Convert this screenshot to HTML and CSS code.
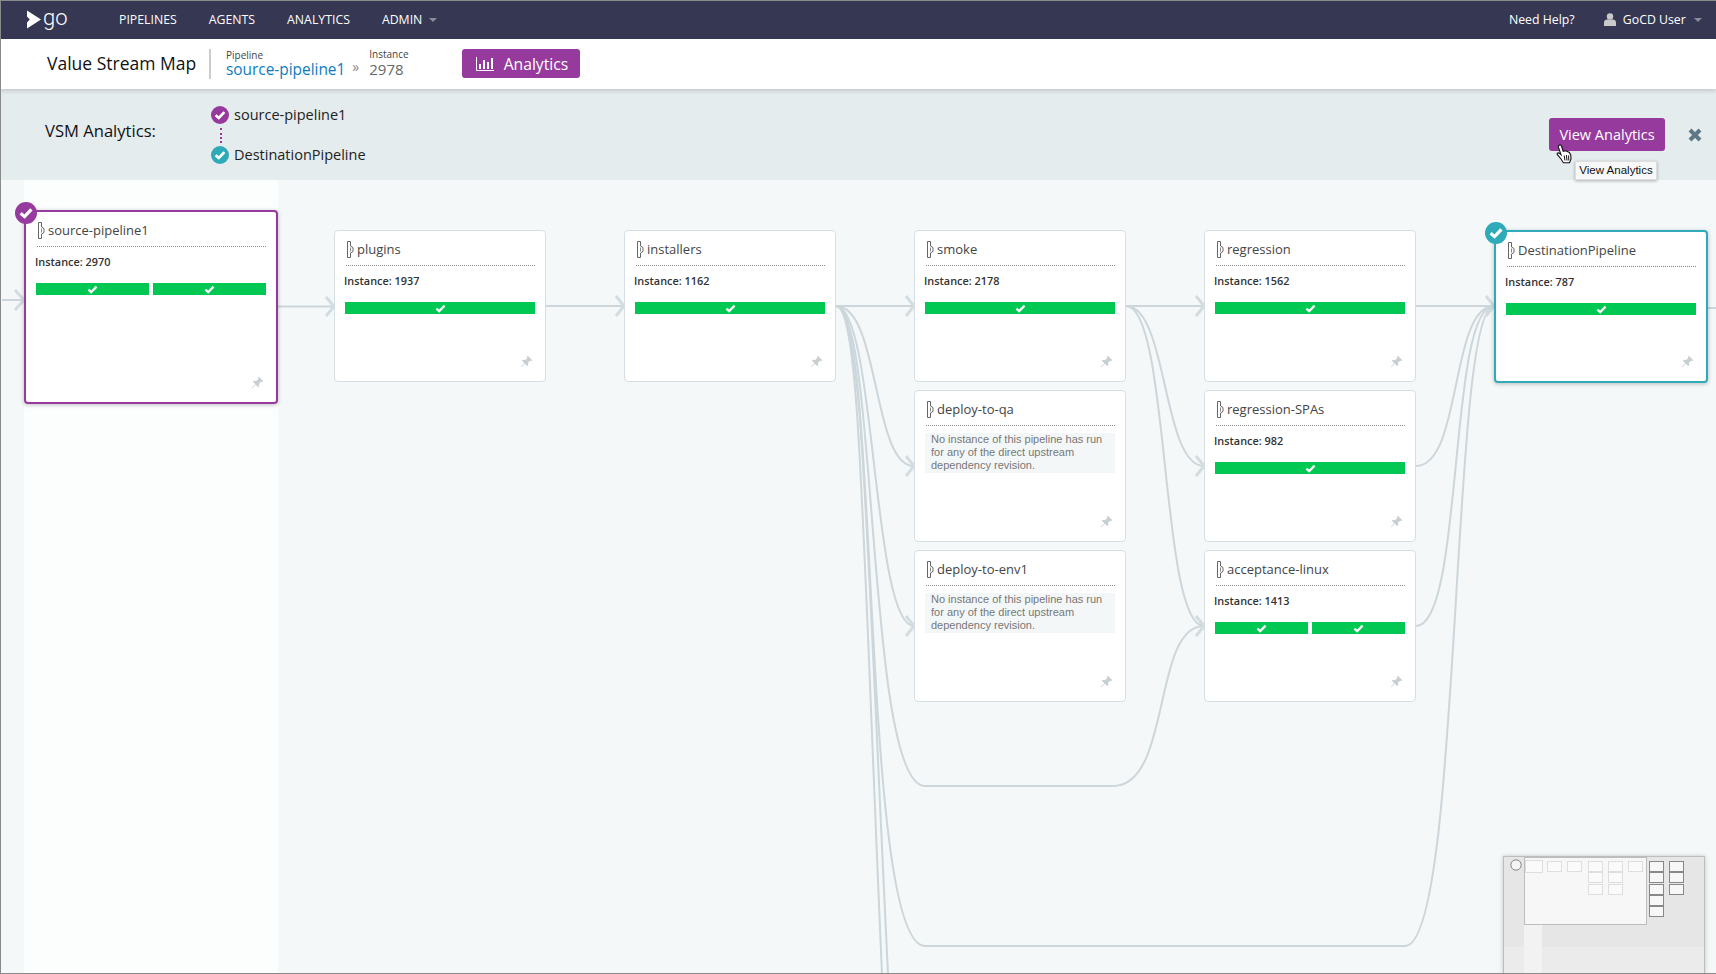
FILE: index.html
```html
<!DOCTYPE html>
<html lang="en">
<head>
<meta charset="UTF-8" />
<title>Value Stream Map</title>
<link rel="stylesheet" href="styles.css">
</head>
<body>

<svg class="sprites" width="0" height="0">
  <symbol id="i-check" viewBox="0 0 12 10"><path d="M1.5 5.2 4.5 8 10.5 1.8" fill="none" stroke="#fff" stroke-width="2.6"/></symbol>
  <symbol id="i-pipe" viewBox="0 0 8 17"><path d="M1.5.5H4.5V5L7 6.5V10.5L4.5 12V16.5H1.5Z" fill="#fff" stroke="#666" stroke-width="1"/><path d="M4.5 6.5V10.5" stroke="#888"/></symbol>
  <symbol id="i-pin" viewBox="0 0 12 12"><path d="M7.2.6 11.4 4.8 10.4 5.6 9.4 5.2 7.4 7.2 7.6 9.4 6.6 10.2 4.4 8 1.2 11.2.8 10.8 4 7.6 1.8 5.4 2.6 4.4 4.8 4.6 6.8 2.6 6.4 1.6Z" fill="#c8cfd3"/></symbol>
</svg>

<header class="topbar">
  <a class="logo">
    <svg class="logo-mark" width="16" height="20" viewBox="0 0 16 20"><path d="M1 .5 15 9.5 1 18.5V12.5L3.8 9.5 1 6.5Z" fill="#fff"/></svg>
    <span class="logo-text">go</span>
  </a>
  <nav class="main-nav">
    <a>Pipelines</a>
    <a>Agents</a>
    <a>Analytics</a>
    <a class="caret">Admin</a>
  </nav>
  <div class="user-nav">
    <a>Need Help?</a>
    <a class="caret user">
      <svg width="12" height="13" viewBox="0 0 12 13"><circle cx="6" cy="3.4" r="3.2" fill="#c9c9c9"/><path d="M0 13V9.5C0 7.5 1.5 6.5 3 6.5H9C10.5 6.5 12 7.5 12 9.5V13Z" fill="#c9c9c9"/></svg>
      GoCD User
    </a>
  </div>
</header>

<section class="subheader">
  <h1>Value Stream Map</h1>
  <div class="crumb">
    <label>Pipeline</label>
    <a>source-pipeline1</a>
  </div>
  <span class="crumb-sep">&raquo;</span>
  <div class="crumb instance">
    <label>Instance</label>
    <span>2978</span>
  </div>
  <button class="btn btn-analytics">
    <svg width="18" height="14" viewBox="0 0 18 14"><path d="M.5 0V13.5H18" fill="none" stroke="#fff"/><path d="M3 7H5V12H3ZM7 3H9V12H7ZM11 5H13V12H11ZM15 1H17V12H15Z" fill="#fff"/></svg>
    Analytics
  </button>
</section>

<section class="analytics-band">
  <h2>VSM Analytics:</h2>
  <div class="selection">
    <div class="selected">
      <svg class="dot" viewBox="0 0 18 18"><circle cx="9" cy="9" r="9" fill="#963a9e"/><path d="M4.6 9.2 7.8 12 13.4 6.2" fill="none" stroke="#fff" stroke-width="2.6"/></svg>
      source-pipeline1
    </div>
    <div class="selected-link"></div>
    <div class="selected">
      <svg class="dot" viewBox="0 0 18 18"><circle cx="9" cy="9" r="9" fill="#2eaab9"/><path d="M4.6 9.2 7.8 12 13.4 6.2" fill="none" stroke="#fff" stroke-width="2.6"/></svg>
      DestinationPipeline
    </div>
  </div>
  <div class="view-wrap">
    <button class="btn btn-view">View Analytics</button>
    <svg class="hand" width="17" height="20" viewBox="0 0 17 20">
      <path d="M3.2 1.2C4.2.6 5.2 1 5.5 2L7.2 7.4 9.4 6.8 11.4 7.4 13.4 8.4 14.8 11.2 15 15 13.6 18.8H7.4L5 15 1.2 10.4C.8 9 2.2 8.4 3.2 9.2L5 10.8 2.4 3.2C2.2 2.4 2.5 1.6 3.2 1.2Z" fill="#fff" stroke="#111" stroke-width="1.1"/>
      <path d="M8.2 11.5 9 16.5M10.4 11 11 16.5M12.6 11.5 12.8 16.5" stroke="#111" fill="none"/>
    </svg>
    <div class="tooltip">View Analytics</div>
  </div>
  <svg class="close" width="14" height="14" viewBox="0 0 14 14"><path d="M2 2 12 12M12 2 2 12" stroke="#5e7885" stroke-width="4"/></svg>
</section>

<main class="canvas">
  <svg class="edges" width="1716" height="794" viewBox="0 180 1716 794" fill="none">
    <g class="edge">
      <path d="M2 300H24"/>
      <path d="M278 306.5H334"/>
      <path d="M546 306H624"/>
      <path d="M836 306H914"/>
      <path d="M836 306C880 306 872 466 914 466"/>
      <path d="M836 306C876 306 872 626 914 626"/>
      <path d="M836 306C878 306 866 786 925 786H1113C1172 786 1152 626 1204 626"/>
      <path d="M836 306C880 306 860 946 925 946H1405C1462 946 1450 306 1494 306"/>
      <path d="M836 306C860 306 862 520 882 974"/>
      <path d="M836 306C862 306 866 520 888 974"/>
      <path d="M1126 306H1204"/>
      <path d="M1126 306C1168 306 1162 466 1204 466"/>
      <path d="M1126 306C1170 306 1160 626 1204 626"/>
      <path d="M1416 306H1494"/>
      <path d="M1416 466C1462 466 1450 306 1494 306"/>
      <path d="M1416 626C1464 626 1448 306 1494 306"/>
      <path d="M1708 308H1716"/>
    </g>
    <g class="arrow">
      <path d="M15 290 24 300 15 310"/>
      <path d="M326 297 334 306.5 326 316"/>
      <path d="M616 296 624 306 616 316"/>
      <path d="M906 296 914 306 906 316"/>
      <path d="M906 456 914 466 906 476"/>
      <path d="M906 616 914 626 906 636"/>
      <path d="M1196 296 1204 306 1196 316"/>
      <path d="M1196 456 1204 466 1196 476"/>
      <path d="M1196 616 1204 626 1196 636"/>
      <path d="M1486 296 1494 306 1486 316"/>
    </g>
  </svg>

  <div class="columns">
    <div class="col col-source">
      <article class="node node-source">
        <svg class="badge" viewBox="0 0 22 22"><circle cx="11" cy="11" r="11" fill="#963a9e"/><path d="M5.6 11.2 9.6 14.6 16.4 7.4" fill="none" stroke="#fff" stroke-width="3.2"/></svg>
        <div class="node-title"><svg class="pipe"><use href="#i-pipe"/></svg>source-pipeline1</div>
        <p class="node-instance">Instance: 2970</p>
        <div class="stages">
          <span class="stage"><svg><use href="#i-check"/></svg></span>
          <span class="stage"><svg><use href="#i-check"/></svg></span>
        </div>
        <svg class="pin"><use href="#i-pin"/></svg>
      </article>
    </div>

    <div class="col">
      <article class="node">
        <div class="node-title"><svg class="pipe"><use href="#i-pipe"/></svg>plugins</div>
        <p class="node-instance">Instance: 1937</p>
        <div class="stages"><span class="stage"><svg><use href="#i-check"/></svg></span></div>
        <svg class="pin"><use href="#i-pin"/></svg>
      </article>
    </div>

    <div class="col">
      <article class="node">
        <div class="node-title"><svg class="pipe"><use href="#i-pipe"/></svg>installers</div>
        <p class="node-instance">Instance: 1162</p>
        <div class="stages"><span class="stage"><svg><use href="#i-check"/></svg></span></div>
        <svg class="pin"><use href="#i-pin"/></svg>
      </article>
    </div>

    <div class="col">
      <article class="node">
        <div class="node-title"><svg class="pipe"><use href="#i-pipe"/></svg>smoke</div>
        <p class="node-instance">Instance: 2178</p>
        <div class="stages"><span class="stage"><svg><use href="#i-check"/></svg></span></div>
        <svg class="pin"><use href="#i-pin"/></svg>
      </article>
      <article class="node">
        <div class="node-title"><svg class="pipe"><use href="#i-pipe"/></svg>deploy-to-qa</div>
        <p class="node-empty">No instance of this pipeline has run for any of the direct upstream dependency revision.</p>
        <svg class="pin"><use href="#i-pin"/></svg>
      </article>
      <article class="node">
        <div class="node-title"><svg class="pipe"><use href="#i-pipe"/></svg>deploy-to-env1</div>
        <p class="node-empty">No instance of this pipeline has run for any of the direct upstream dependency revision.</p>
        <svg class="pin"><use href="#i-pin"/></svg>
      </article>
    </div>

    <div class="col">
      <article class="node">
        <div class="node-title"><svg class="pipe"><use href="#i-pipe"/></svg>regression</div>
        <p class="node-instance">Instance: 1562</p>
        <div class="stages"><span class="stage"><svg><use href="#i-check"/></svg></span></div>
        <svg class="pin"><use href="#i-pin"/></svg>
      </article>
      <article class="node">
        <div class="node-title"><svg class="pipe"><use href="#i-pipe"/></svg>regression-SPAs</div>
        <p class="node-instance">Instance: 982</p>
        <div class="stages"><span class="stage"><svg><use href="#i-check"/></svg></span></div>
        <svg class="pin"><use href="#i-pin"/></svg>
      </article>
      <article class="node">
        <div class="node-title"><svg class="pipe"><use href="#i-pipe"/></svg>acceptance-linux</div>
        <p class="node-instance">Instance: 1413</p>
        <div class="stages">
          <span class="stage"><svg><use href="#i-check"/></svg></span>
          <span class="stage"><svg><use href="#i-check"/></svg></span>
        </div>
        <svg class="pin"><use href="#i-pin"/></svg>
      </article>
    </div>

    <div class="col col-dest">
      <article class="node node-dest">
        <svg class="badge" viewBox="0 0 22 22"><circle cx="11" cy="11" r="11" fill="#2eaab9"/><path d="M5.6 11.2 9.6 14.6 16.4 7.4" fill="none" stroke="#fff" stroke-width="3.2"/></svg>
        <div class="node-title"><svg class="pipe"><use href="#i-pipe"/></svg>DestinationPipeline</div>
        <p class="node-instance">Instance: 787</p>
        <div class="stages"><span class="stage"><svg><use href="#i-check"/></svg></span></div>
        <svg class="pin"><use href="#i-pin"/></svg>
      </article>
    </div>
  </div>

  <svg class="minimap" width="203" height="118" viewBox="0 0 203 118">
    <rect x=".5" y=".5" width="201" height="120" fill="#e6e6e6" stroke="#bdbdbd"/>
    <rect x="1" y="91" width="200" height="27" fill="#ebebeb"/>
    <rect x="21" y="69" width="18" height="49" fill="#f2f2f2"/>
    <rect x="21.5" y="1.5" width="122" height="67" fill="#f7f7f7" stroke="#bdbdbd"/>
    <circle cx="13" cy="9" r="5.2" fill="#f4f4f4" stroke="#888"/>
    <g class="mini-light">
      <rect x="22.5" y="4.5" width="17" height="12"/>
      <rect x="44.5" y="5.5" width="14" height="10"/>
      <rect x="64.5" y="5.5" width="14" height="10"/>
      <rect x="85.5" y="5.5" width="14" height="10"/>
      <rect x="85.5" y="16.5" width="14" height="10"/>
      <rect x="85.5" y="28.5" width="14" height="10"/>
      <rect x="105.5" y="5.5" width="14" height="10"/>
      <rect x="105.5" y="16.5" width="14" height="10"/>
      <rect x="105.5" y="28.5" width="14" height="10"/>
      <rect x="125.5" y="5.5" width="14" height="10"/>
    </g>
    <g class="mini-dark">
      <rect x="146.5" y="5.5" width="14" height="10"/>
      <rect x="146.5" y="16.5" width="14" height="10"/>
      <rect x="146.5" y="28.5" width="14" height="10"/>
      <rect x="146.5" y="39.5" width="14" height="10"/>
      <rect x="146.5" y="50.5" width="14" height="10"/>
      <rect x="166.5" y="5.5" width="14" height="10"/>
      <rect x="166.5" y="16.5" width="14" height="10"/>
      <rect x="166.5" y="28.5" width="14" height="10"/>
    </g>
  </svg>
</main>

</body>
</html>
```

FILE: styles.css
```css
* {
  box-sizing: border-box;
}
html, body {
  margin: 0;
  height: 974px;
  overflow: hidden;
}
body {
  font-family: "Open Sans", sans-serif;
  color: #222;
  background: #f4f8f9;
}
/* window edge from the original capture */
body::after {
  content: "";
  position: fixed;
  inset: 0;
  border: 1px solid #8a8a8a;
  border-right: none;
  pointer-events: none;
  z-index: 10;
}
.sprites {
  position: absolute;
}

/* top bar */
.topbar {
  height: 39px;
  background: #363753;
  color: #fff;
  display: flex;
  align-items: center;
  padding: 0 14px 0 26px;
  font-size: 12.3px;
}
.logo {
  display: flex;
  align-items: center;
  width: 41px;
  gap: 1px;
}
.logo-mark {
  flex-shrink: 0;
}
.logo-text {
  font-family: Roboto, sans-serif;
  font-size: 22px;
  font-weight: 300;
  line-height: 20px;
  margin-top: -3px;
}
.main-nav {
  display: flex;
  gap: 32px;
  margin-left: 52px;
  text-transform: uppercase;
}
.user-nav {
  display: flex;
  align-items: center;
  gap: 29px;
  margin-left: auto;
}
.caret::after {
  content: "";
  display: inline-block;
  margin-left: 5px;
  vertical-align: 2px;
  border: 4px solid transparent;
  border-top-color: #8b8c9e;
  border-bottom: none;
}
.main-nav .caret::after {
  margin-left: 7px;
}
.user svg {
  margin-right: 4px;
  vertical-align: -2px;
}

/* page title row */
.subheader {
  position: relative;
  height: 50px;
  background: #fff;
  box-shadow: 0 2px 4px rgba(0, 0, 0, .15);
  display: flex;
  align-items: center;
  padding-left: 47px;
}
.subheader h1 {
  margin: 0 15px 0 0;
  font-size: 17.5px;
  font-weight: 400;
  color: #111;
  width: 164px;
  height: 30px;
  line-height: 28px;
  border-right: 2px solid #ccc;
}
.crumb {
  display: flex;
  flex-direction: column;
}
.crumb label {
  font-size: 10px;
  line-height: 11px;
  color: #444;
}
.crumb a {
  font-size: 15.4px;
  line-height: 18px;
  color: #0d7cc0;
}
.crumb-sep {
  color: #888;
  font-size: 14px;
  margin: 4px 10px 0 7px;
}
.instance {
  margin-top: -1px;
}
.instance span {
  font-size: 15px;
  line-height: 18px;
  color: #666;
}
.btn {
  border: none;
  border-radius: 3px;
  background: #963a9e;
  color: #fff;
  font-family: inherit;
  padding: 0;
}
.btn-analytics {
  display: flex;
  align-items: center;
  gap: 10px;
  height: 29px;
  width: 118px;
  padding-left: 14px;
  margin: -1px 0 0 53px;
  font-size: 15.7px;
}

/* analytics band */
.analytics-band {
  height: 91px;
  background: #e5ecee;
  display: flex;
  align-items: center;
  padding-left: 45px;
}
.analytics-band h2 {
  margin: 0 0 8px;
  width: 165px;
  font-size: 16.6px;
  font-weight: 500;
  color: #111;
}
.selected {
  display: flex;
  align-items: center;
  gap: 5px;
  height: 20px;
  margin-left: 1px;
  font-size: 14.5px;
  color: #222;
}
.dot {
  width: 18px;
  height: 18px;
}
.selected-link {
  height: 15px;
  margin: 3px 0 2px 10px;
  border-left: 2px dotted #963a9e;
}
.view-wrap {
  position: relative;
  margin-left: auto;
  margin-top: -1px;
}
.btn-view {
  display: block;
  width: 116px;
  height: 33px;
  font-size: 14.5px;
}
.hand {
  position: absolute;
  left: 7px;
  top: 26px;
}
.tooltip {
  position: absolute;
  left: 26px;
  top: 43px;
  width: 82px;
  height: 19px;
  background: #f8f8f8;
  border: 1px solid #ddd;
  box-shadow: 0 1px 3px rgba(0, 0, 0, .3);
  font: 11.5px/17px "Liberation Sans", sans-serif;
  color: #111;
  text-align: center;
  white-space: nowrap;
}
.close {
  margin: 1px 14px 0 23px;
}

/* map */
.canvas {
  position: relative;
  height: 794px;
  overflow: hidden;
}
.edges {
  position: absolute;
  left: 0;
  top: 0;
  z-index: 2;
  pointer-events: none;
}
.edge path {
  stroke: #ccd6db;
  stroke-width: 2;
}
.arrow path {
  stroke: #d3dce0;
  stroke-width: 3;
}
.columns {
  display: flex;
  height: 100%;
  padding-left: 24px;
}
.col {
  display: flex;
  flex-direction: column;
  gap: 8px;
  width: 212px;
  margin-left: 78px;
  padding-top: 50px;
}
.col-source {
  width: 254px;
  margin-left: 0;
  padding-top: 30px;
  margin-right: -22px;
  background: #fcfdfd;
}
.col-dest {
  width: 214px;
}
.node {
  position: relative;
  z-index: 3;
  height: 152px;
  background: #fff;
  border: 1px solid #d5dfe3;
  border-radius: 4px;
}
.node-source, .node-dest {
  border-width: 2px;
  box-shadow: 0 1px 4px rgba(0, 0, 0, .25);
}
.node-source {
  height: 194px;
  border-color: #963a9e;
}
.node-dest {
  height: 153px;
  border-color: #2eaab9;
}
.badge {
  position: absolute;
  left: -11px;
  top: -10px;
  width: 22px;
  height: 22px;
}
.node-title {
  height: 35px;
  margin: 0 10px 0 11px;
  padding-top: 8px;
  font-size: 13px;
  line-height: 20px;
  color: #444;
  border-bottom: 1px dotted #888;
  white-space: nowrap;
}
.pipe {
  width: 8px;
  height: 17px;
  margin: 0 3px 0 0;
  vertical-align: -4px;
}
.node-instance {
  margin: 7px 0 13px 9px;
  font-size: 10.9px;
  line-height: 16px;
  font-weight: 600;
  color: #333;
}
.stages {
  display: flex;
  gap: 4px;
  margin: 0 10px;
}
.stage {
  flex: 1;
  height: 12px;
  background: #00c853;
  display: flex;
  align-items: center;
  justify-content: center;
}
.stage svg {
  width: 11px;
  height: 9px;
}
.node-empty {
  margin: 7px 10px 0;
  height: 40px;
  padding-left: 6px;
  background: #f4f7f8;
  font: 11px/13px "Liberation Sans", sans-serif;
  color: #777;
}
.pin {
  position: absolute;
  right: 12px;
  bottom: 13px;
  width: 13px;
  height: 13px;
}

/* minimap */
.minimap {
  position: absolute;
  right: 10px;
  bottom: 0;
  z-index: 5;
  filter: drop-shadow(0 0 2px rgba(0, 0, 0, .2));
}
.mini-light rect {
  fill: #fafafa;
  stroke: #dedede;
}
.mini-dark rect {
  fill: #f7f7f7;
  stroke: #888;
}
```
